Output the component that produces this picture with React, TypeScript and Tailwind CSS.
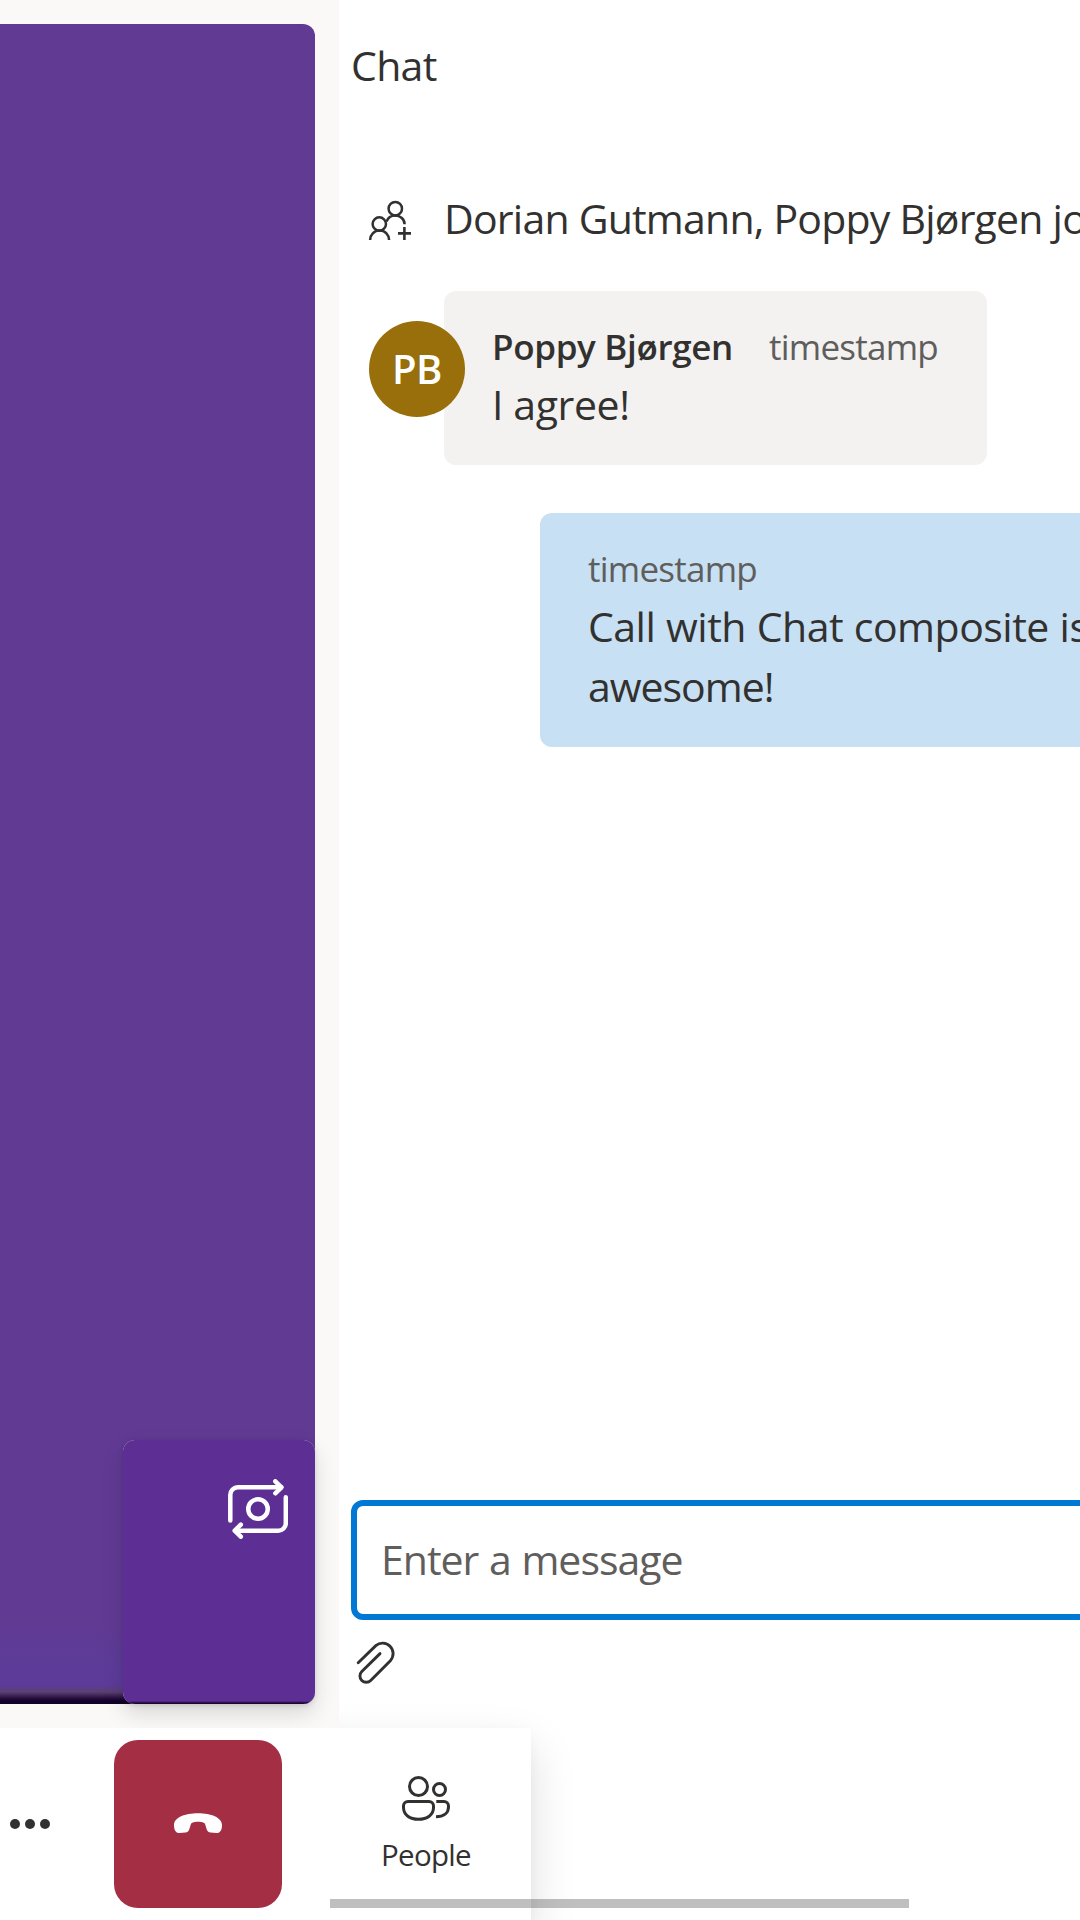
import React from "react";

function JoinedIcon() {
  return (
    <svg className="h-[60px] w-[60px] shrink-0" viewBox="360 191 60 60" fill="none" stroke="#323130" strokeWidth="2.500">
      <circle cx="395.3" cy="208.7" r="6.700" />
      <circle cx="379.3" cy="224" r="6.700" />
      <path d="M370.100 240c0-5 4-9.400 9.500-9.400s9.500 4.400 9.500 9.400" />
      <path d="M386.600 221.500c1.200-3.600 4.700-6 8.700-6 5 0 9.300 3.800 9.300 8.700" />
      <path d="M404.400 227v13M398 233.400h13" strokeWidth="2.600" />
    </svg>
  );
}

function SwitchCameraIcon() {
  return (
    <svg className="h-[60px] w-[60px]" viewBox="228 1479 60 60" fill="none" stroke="#fff" strokeWidth="4.500" strokeLinecap="round" strokeLinejoin="round">
      <path d="M230.300 1520.500v-25.700a7.500 7.500 0 0 1 7.500-7.500h43.200" />
      <path d="M275.300 1481.300l6.200 6-6.200 6" />
      <path d="M285.800 1497.300v25.900a7.500 7.500 0 0 1-7.500 7.500h-43" />
      <path d="M240.800 1524.700l-6.100 6 6.100 6" />
      <circle cx="258" cy="1509" r="9.750" />
    </svg>
  );
}

function PaperclipIcon() {
  return (
    <svg className="h-[60px] w-[60px]" viewBox="345 1632 60 60" fill="none" stroke="#323130" strokeWidth="2.900" strokeLinecap="round">
      <path d="M358.200 1662.700l17.600-17.100a10.500 10.500 0 0 1 14.800 14.800l-19.900 20.100a6.300 6.300 0 0 1-8.900-9l18.200-17.900" />
    </svg>
  );
}

function PeopleIcon() {
  return (
    <svg className="h-[60px] w-[60px]" viewBox="396 1770 60 60" fill="none" stroke="#323130" strokeWidth="3">
      <circle cx="418.500" cy="1786.500" r="9" />
      <circle cx="439.500" cy="1789.500" r="6" />
      <path d="M408 1801.500h21a4.500 4.500 0 0 1 4.500 4.500v1.500c0 7.500-6.500 11.800-15 11.800s-15-4.300-15-11.800v-1.500a4.500 4.500 0 0 1 4.500-4.500z" />
      <path d="M436.300 1801.500h7.700a4.500 4.500 0 0 1 4.500 4.500v1c0 5.900-4.800 9.700-12.500 9.700" />
    </svg>
  );
}

function HangUpIcon() {
  return (
    <svg className="h-[60px] w-[60px]" viewBox="168 1794 60 60" fill="#fff">
      <path d="M198 1813.200c-13 0-24 4.300-24 11.600 0 5.200 1.600 8.400 5.600 8.300l5.800-.5c2.200-.3 3.300-1.300 4-3.600l1.300-4.300c.3-1.200.7-1.600 1.600-2 1.600-.7 3.600-1 5.700-1s4.100.3 5.700 1c.9.4 1.300.8 1.600 2l1.300 4.300c.7 2.300 1.800 3.300 4 3.600l5.800.5c4 .1 5.600-3.100 5.600-8.300 0-7.300-11-11.600-24-11.600z" />
    </svg>
  );
}

function CallPane() {
  return (
    <section className="relative z-10 h-full w-[339px] shrink-0 overflow-hidden bg-[#faf9f8] pt-6 pr-6">
      <div className="relative h-[1680px] rounded-r-xl bg-[linear-gradient(to_bottom,#613a94_0,#613a94_1600px,#5c3c98_1640px,#5d3b9a_1661px,#5b3f72_1668px,#2a1040_1674px,#10002a_1677px)]">
        <div className="absolute right-0 bottom-0 h-[264px] w-[192px] rounded-xl bg-[#e8e0f0] shadow-[0_9.6px_21.6px_rgba(0,0,0,0.132),0_1.8px_5.4px_rgba(0,0,0,0.108)]">
          <div className="flex h-full justify-end rounded-xl bg-[linear-gradient(to_bottom,#5d2f94_0,#5d2f94_261px,#1c0638_263px)] pt-[39px] pr-[27px]">
            <SwitchCameraIcon />
          </div>
        </div>
      </div>
    </section>
  );
}

function ChatPane() {
  return (
    <section className="flex h-full grow flex-col pl-3">
      <h1 className="mt-[35px] h-[60px] text-[41px] leading-[60px] font-normal">
        <span className="tracking-[-0.700px]">Chat</span>
      </h1>
      <div className="mt-[96px] ml-[9px] flex h-[60px] items-center">
        <JoinedIcon />
        <p className="-mt-[6px] ml-[24px] text-[41px] leading-[60px] tracking-[-0.780px] whitespace-nowrap">
          Dorian Gutmann, Poppy Bjørgen joined the chat
        </p>
      </div>
      <div className="mt-[40px] ml-[18px] flex">
        <div className="z-10 mt-[30px] flex h-24 w-24 items-center justify-center rounded-full bg-[#986f0b] text-[40px] font-semibold text-white">
          <span className="-mt-px tracking-[-0.500px]">PB</span>
        </div>
        <div className="-ml-[21px] h-[174px] w-[543px] rounded-xl bg-[#f3f2f1] px-12 pt-[29px]">
          <div className="flex h-[54px] items-center gap-9 text-[35px] leading-[54px] whitespace-nowrap">
            <span className="font-semibold tracking-[-0.340px]">Poppy Bjørgen</span>
            <span className="tracking-[-0.750px] text-[#605e5c]">timestamp</span>
          </div>
          <p className="text-[41px] leading-[60px] tracking-[-0.400px]">I agree!</p>
        </div>
      </div>
      <div className="mt-12 -mr-24 ml-[189px] h-[234px] rounded-l-xl bg-[#c7e0f4] px-12 pt-[29px] whitespace-nowrap">
        <div className="h-[54px] text-[35px] leading-[54px] tracking-[-0.750px] text-[#605e5c]">timestamp</div>
        <p className="text-[41px] leading-[60px]">
          <span className="tracking-[-0.500px] [word-spacing:0.600px]">Call with Chat composite is</span>
          <br />
          <span className="tracking-[-1px]">awesome!</span>
        </p>
      </div>
      <div className="mt-[753px] -mr-24 flex h-[120px] items-center rounded-xl border-6 border-[#0078d4] pl-6 text-[41px] tracking-[-1px] text-[#605e5c] [word-spacing:1px]">
        <span>Enter a message</span>
      </div>
      <button className="mt-3 -ml-[6px] w-[60px]">
        <PaperclipIcon />
      </button>
    </section>
  );
}

function ControlBar() {
  return (
    <footer className="flex h-[192px] w-[531px] bg-white pt-3 shadow-[0_19px_43px_rgba(0,0,0,0.132),0_4px_11px_rgba(0,0,0,0.03)]">
      <button className="flex h-[168px] w-[114px] items-center gap-[4.400px] pl-[9.700px]">
        <span className="h-[10.600px] w-[10.600px] rounded-full bg-[#323130]" />
        <span className="h-[10.600px] w-[10.600px] rounded-full bg-[#323130]" />
        <span className="h-[10.600px] w-[10.600px] rounded-full bg-[#323130]" />
      </button>
      <button className="flex h-[168px] w-[168px] items-center justify-center rounded-3xl bg-[#a42e43]">
        <HangUpIcon />
      </button>
      <button className="ml-[60px] flex w-[168px] flex-col items-center pt-[30px]">
        <PeopleIcon />
        <span className="mt-px text-[29.500px] leading-[48px] tracking-[-0.700px]">People</span>
      </button>
    </footer>
  );
}

export default function App() {
  return (
    <main className="relative h-[1920px] w-[1080px] overflow-hidden bg-white font-['Segoe_UI','Open_Sans',sans-serif] text-[#323130]">
      <div className="flex h-[1728px]">
        <CallPane />
        <ChatPane />
      </div>
      <ControlBar />
      <div className="absolute bottom-3 left-[330px] h-[9px] w-[579px] bg-black/25" />
    </main>
  );
}
